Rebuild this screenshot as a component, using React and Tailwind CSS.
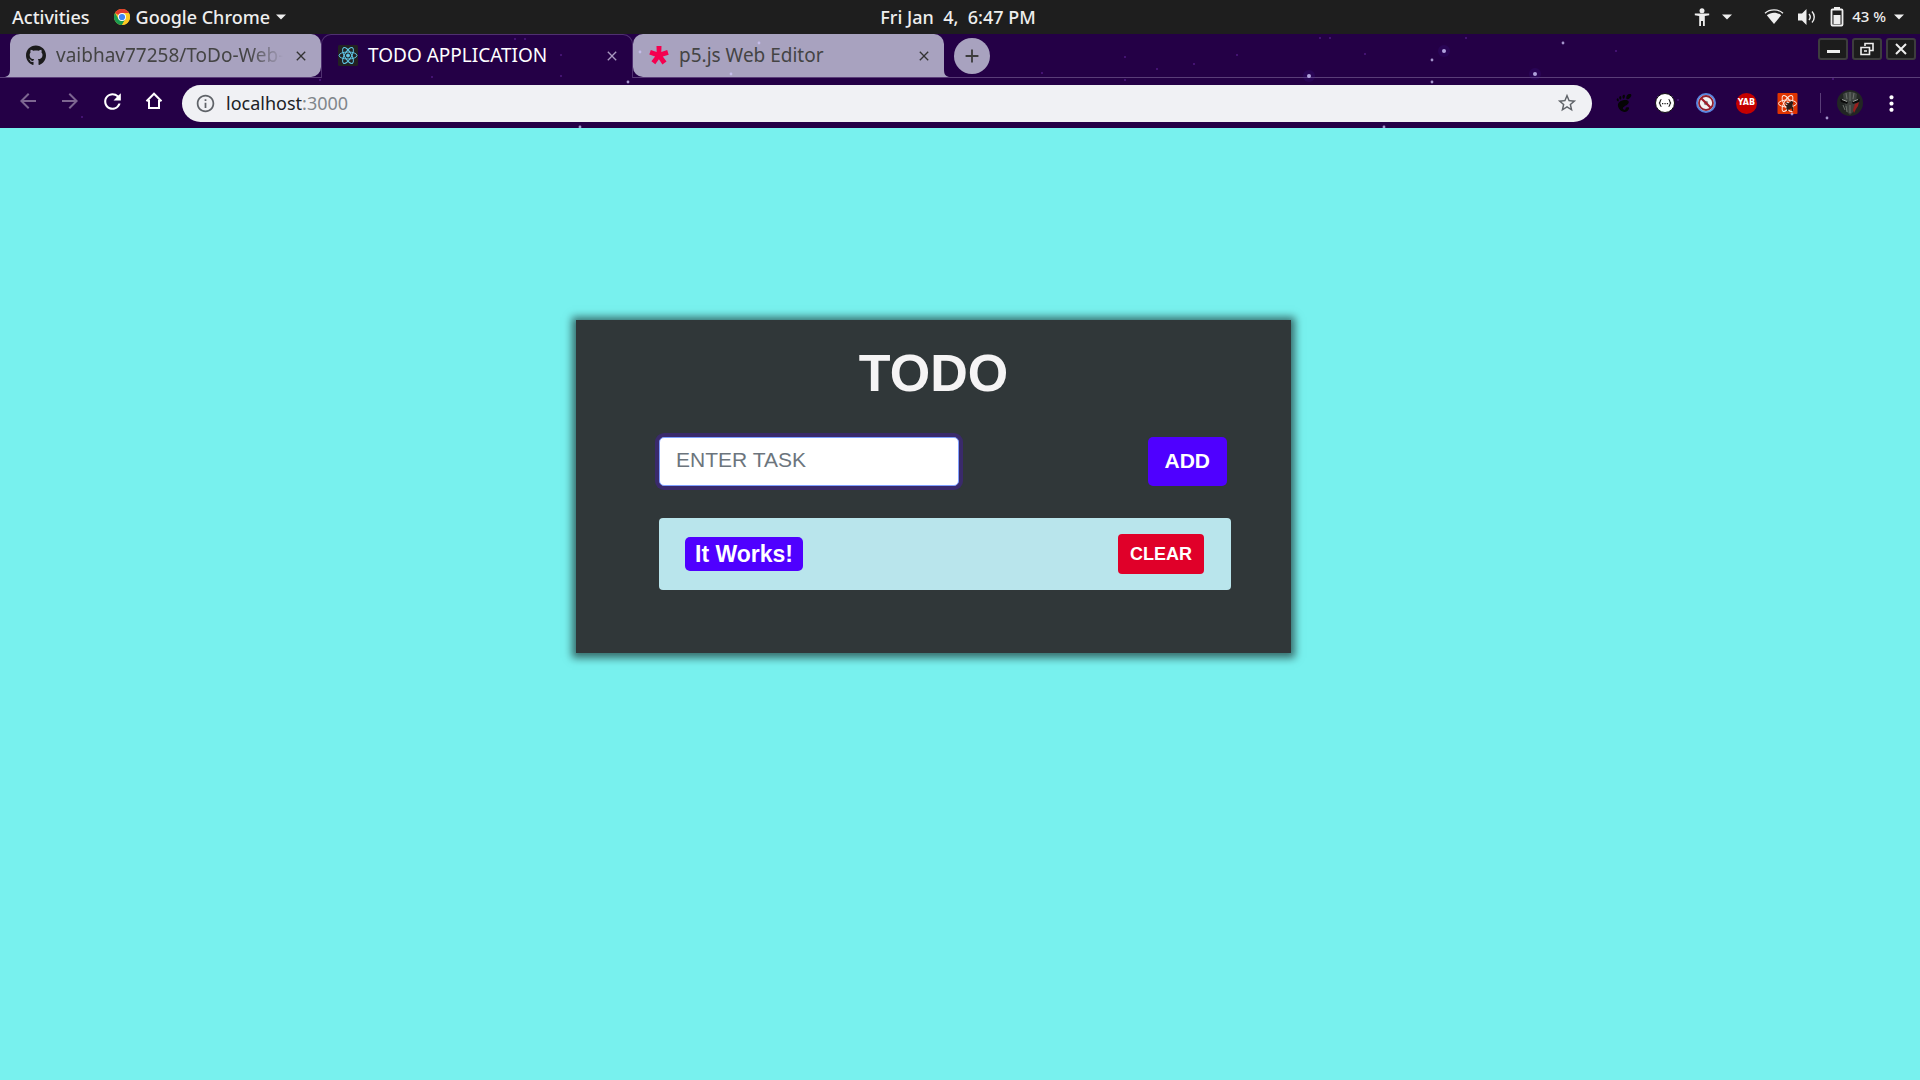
import { useState } from "react";
import { FaGithub } from "react-icons/fa";
import { SiGnome } from "react-icons/si";
import {
  MdAdd,
  MdArrowBack,
  MdArrowForward,
  MdClose,
  MdInfoOutline,
  MdMoreVert,
  MdRefresh,
  MdStarBorder,
} from "react-icons/md";

const faintStars = [
  [515, 5], [525, 5], [561, 21], [561, 42], [1125, 23], [1125, 46], [1042, 39],
  [1157, 35], [1194, 30], [1237, 21], [1320, 4], [1330, 4], [1365, 20], [1466, 4], [1616, 17],
  [320, 46], [432, 43], [82, 83], [1678, 66], [1833, 45],
];
const smallStars = [
  [640, 18], [759, 9], [731, 40], [628, 48], [1432, 26], [1432, 48], [1563, 9], [1792, 80],
  [1827, 84], [580, 93], [1384, 93],
];
const glowingStars = [[1309, 42], [1444, 17], [1535, 40]];

function Stars() {
  return (
    <svg className="pointer-events-none absolute inset-0 h-full w-full" aria-hidden="true">
      {faintStars.map(([x, y]) => (
        <circle key={`${x}-${y}`} cx={x} cy={y} r="1" fill="#6a2aa8" opacity="0.6" />
      ))}
      {smallStars.map(([x, y]) => (
        <circle key={`${x}-${y}`} cx={x} cy={y} r="1.4" fill="#cfc6f8" opacity="0.75" />
      ))}
      {glowingStars.map(([x, y]) => (
        <g key={`${x}-${y}`}>
          <circle cx={x} cy={y} r="6" fill="#4a20b0" opacity="0.15" />
          <circle cx={x} cy={y} r="2" fill="#c9c0f5" opacity="0.85" />
        </g>
      ))}
    </svg>
  );
}

function Caret() {
  return (
    <svg width="10" height="6" viewBox="0 0 10 6" aria-hidden="true">
      <path d="M0 .5h10L5 5.5z" fill="#eee" />
    </svg>
  );
}

function ChromeLogo() {
  return (
    <svg width="16" height="16" viewBox="0 0 16 16" aria-hidden="true">
      <circle cx="8" cy="8" r="8" fill="#fbc02d" />
      <path d="M8 8 1.07 4A8 8 0 0 1 14.93 4H8z" fill="#e23b2e" />
      <path d="M8 8 4.5 10 1.07 4A8 8 0 0 0 8 16l3.5-6z" fill="#1a9c50" />
      <path d="M8 4h6.93A8 8 0 0 1 8 16l3.5-6z" fill="#fdc922" />
      <circle cx="8" cy="8" r="4" fill="#fff" />
      <circle cx="8" cy="8" r="3.1" fill="#4285f4" />
    </svg>
  );
}

function Atom({ color }) {
  return (
    <g fill="none" stroke={color} strokeWidth="1">
      <ellipse cx="10" cy="10.500" rx="9" ry="3.500" />
      <ellipse cx="10" cy="10.500" rx="9" ry="3.500" transform="rotate(60 10 10.500)" />
      <ellipse cx="10" cy="10.500" rx="9" ry="3.500" transform="rotate(120 10 10.500)" />
      <circle cx="10" cy="10.500" r="1.500" fill={color} />
    </g>
  );
}

function ReactIcon() {
  return (
    <svg width="20" height="21" viewBox="0 0 20 21" aria-hidden="true">
      <rect width="20" height="21" rx="1.500" fill="#222" />
      <Atom color="#61c8e8" />
    </svg>
  );
}

function P5Icon() {
  return (
    <svg width="20" height="20" viewBox="0 0 20 20" aria-hidden="true">
      <path
        d="M7.500 0h5l-.2 6 5.900-1.900L19.700 8.700l-5.900 1.800 3.700 4.900-4.100 3-3.500-5.200-3.600 5-3.900-3 3.700-4.800L.3 8.500 1.800 4l5.900 2z"
        fill="#f5004f"
      />
    </svg>
  );
}

function HomeIcon() {
  return (
    <svg width="18" height="18" viewBox="0 0 18 18" aria-hidden="true">
      <path d="M1.500 9.200 9 1.700l7.500 7.500M4 8v8h10V8" fill="none" stroke="#fff" strokeWidth="2" />
    </svg>
  );
}

function PersonIcon() {
  return (
    <svg width="16" height="18" viewBox="0 0 16 18" aria-hidden="true">
      <circle cx="8" cy="2.700" r="2.500" fill="#eee" />
      <path d="M.8 5.500h14.400v1.800L10.800 8v10H9v-5H7v5H5.200V8L.8 7.300z" fill="#eee" />
    </svg>
  );
}

function WifiIcon() {
  return (
    <svg width="20" height="17" viewBox="0 0 20 17" aria-hidden="true">
      <path d="M1 5.200C6 .8 14 .8 19 5.200" fill="none" stroke="#eee" strokeWidth="1.300" />
      <path d="M2.800 7.200C7 3.800 13 3.800 17.200 7.200L10 16z" fill="#eee" />
    </svg>
  );
}

function VolumeIcon() {
  return (
    <svg width="20" height="18" viewBox="0 0 20 18" aria-hidden="true">
      <path d="M1 5.500h4L9.500 1v16L5 12.500H1z" fill="#eee" />
      <path d="M12 6c1.500 1.800 1.500 4.200 0 6M15 3.500c3 3.200 3 7.800 0 11" fill="none" stroke="#eee" strokeWidth="1.400" />
    </svg>
  );
}

function BatteryIcon() {
  return (
    <svg width="14" height="20" viewBox="0 0 14 20" aria-hidden="true">
      <path d="M4 0h6v2H4z" fill="#eee" />
      <rect x="1.500" y="2.500" width="11" height="16" rx="1" fill="none" stroke="#eee" strokeWidth="1.800" />
      <path d="M3.500 8h7v9h-7z" fill="#eee" />
    </svg>
  );
}

function TopBar() {
  return (
    <header className="grid h-[34px] grid-cols-[1fr_auto_1fr] items-center bg-[#1e1e1e] pl-3 pr-4 text-lg font-medium text-[#eee]">
      <div className="flex items-center gap-6">
        <button type="button">Activities</button>
        <button type="button" className="flex items-center gap-1.5">
          <ChromeLogo />
          <span>Google Chrome</span>
          <Caret />
        </button>
      </div>
      <button type="button">Fri Jan&nbsp; 4,&nbsp; 6:47 PM</button>
      <div className="flex items-center justify-end">
        <button type="button" aria-label="Accessibility" className="mr-8 flex items-center gap-3">
          <PersonIcon />
          <Caret />
        </button>
        <button type="button" aria-label="System menu" className="flex items-center text-[15px]">
          <span className="flex items-center gap-[13px]">
            <WifiIcon />
            <VolumeIcon />
            <BatteryIcon />
          </span>
          <span className="mx-2">43 %</span>
          <Caret />
        </button>
      </div>
    </header>
  );
}

function Tab({ icon, title, active, fade, round }) {
  const look = active
    ? "h-full border-x border-t border-[#4f3070] rounded-t-[10px] text-white pb-[2px]"
    : `h-[43px] bg-[#a8a2bf] text-[#444] rounded-t-[10px] ${round}`;
  return (
    <div className={active ? "w-[312px]" : "h-full w-[311px] border-b border-[#5a3d78]"}>
      <div className={`flex items-center gap-2.5 pl-4 pr-3 ${look}`}>
        <span className="flex w-5 shrink-0 justify-center">{icon}</span>
        <button
          type="button"
          role="tab"
          aria-selected={!!active}
          className={`min-w-0 flex-1 whitespace-nowrap text-left ${
            fade ? "[mask-image:linear-gradient(90deg,#000_85%,transparent)]" : ""
          }`}
        >
          {title}
        </button>
        <button type="button" aria-label={`Close ${title}`} className={active ? "text-[#a898bf]" : "text-[#333]"}>
          <MdClose size={16} />
        </button>
      </div>
    </div>
  );
}

function WindowButton({ label, children }) {
  return (
    <button
      type="button"
      aria-label={label}
      className="flex h-[22px] w-[30px] items-center justify-center rounded-[3px] border-2 border-[#3d3d3d] bg-[#1c1c1c]"
    >
      <svg width="16" height="16" viewBox="0 0 16 16" fill="none" stroke="#eee" aria-hidden="true">
        {children}
      </svg>
    </button>
  );
}

function TabStrip() {
  return (
    <div className="flex h-11 text-[19px]">
      <div className="flex h-full w-[10px] items-end border-b border-[#5a3d78]">
        <svg width="10" height="8" viewBox="0 0 10 8" aria-hidden="true">
          <path d="M10 0v8H5C9 7 10 5 10 0z" fill="#a8a2bf" />
        </svg>
      </div>
      <div role="tablist" className="flex">
        <Tab icon={<FaGithub size={21} color="#1b1b1b" />} title="vaibhav77258/ToDo-Web-" fade round="rounded-br-[10px]" />
        <Tab icon={<ReactIcon />} title="TODO APPLICATION" active />
        <Tab icon={<P5Icon />} title="p5.js Web Editor" round="rounded-bl-[10px]" />
      </div>
      <div className="flex h-full flex-1 justify-between border-b border-[#5a3d78]">
        <div className="flex items-end">
          <svg width="6" height="8" viewBox="0 0 6 8" aria-hidden="true">
            <path d="M0 0v8h5C1 7 0 5 0 0z" fill="#a8a2bf" />
          </svg>
          <button
            type="button"
            aria-label="New tab"
            className="mb-[3px] ml-1 flex size-9 items-center justify-center rounded-full bg-[#a8a2bf] text-[#3c3c3c]"
          >
            <MdAdd size={22} />
          </button>
        </div>
        <div className="mr-1 mt-1 flex gap-1">
          <WindowButton label="Minimize">
            <path d="M2 10.500h13" strokeWidth="3" />
          </WindowButton>
          <WindowButton label="Restore">
            <path d="M6 5V2.500h8v7h-3M2 6.500h8.500v7H2zM5 10h3" strokeWidth="1.600" />
          </WindowButton>
          <WindowButton label="Close window">
            <path d="m3 3 10 10M13 3 3 13" strokeWidth="2" />
          </WindowButton>
        </div>
      </div>
    </div>
  );
}

function ToolButton({ label, children, narrow }) {
  return (
    <button
      type="button"
      aria-label={label}
      className={`flex h-9 items-center justify-center text-white ${narrow ? "w-[41px]" : "w-[42px]"}`}
    >
      {children}
    </button>
  );
}

function Extensions() {
  return (
    <div className="ml-[11px] flex">
      <ToolButton label="GNOME Shell integration" narrow>
        <SiGnome size={18} color="#050505" />
      </ToolButton>
      <ToolButton label="JSON viewer" narrow>
        <svg width="20" height="20" viewBox="0 0 20 20" aria-hidden="true">
          <circle cx="10" cy="10" r="9.500" fill="#fff" stroke="#111" />
          <path
            d="M6.500 6.500C4.500 6.500 6 9.500 4 10c2 .5.5 3.500 2.500 3.500M13.500 6.500c2 0 .5 3 2.500 3.500-2 .5-.5 3.500-2.500 3.500"
            fill="none"
            stroke="#222"
            strokeWidth="1.200"
          />
          <path d="M7 10h1.300v1.300H7zM9.400 10h1.300v1.300H9.400zM11.800 10h1.300v1.300h-1.300z" fill="#222" />
        </svg>
      </ToolButton>
      <ToolButton label="Popup blocker" narrow>
        <svg width="20" height="20" viewBox="0 0 20 20" fill="none" aria-hidden="true">
          <circle cx="10" cy="10" r="9" fill="#f3f3f3" stroke="#5b86e0" strokeWidth="2" />
          <circle cx="10" cy="10" r="2.200" fill="#888" />
          <circle cx="10" cy="10" r="7" stroke="#8f2030" strokeWidth="1.800" />
          <path d="m5 5 10 10" stroke="#a01c28" strokeWidth="2.200" />
        </svg>
      </ToolButton>
      <ToolButton label="YAB" narrow>
        <span className="flex size-[21px] items-center justify-center rounded-full bg-[#c40000] font-['DejaVu_Sans'] text-[8px] font-bold leading-none">
          YAB
        </span>
      </ToolButton>
      <ToolButton label="React developer tools" narrow>
        <svg width="21" height="21" viewBox="0 0 20 21" aria-hidden="true">
          <rect width="20" height="21" rx="1" fill="#e03400" />
          <Atom color="#ffe9e0" />
          <ellipse cx="12" cy="13" rx="2.600" ry="3.500" transform="rotate(35 12 13)" fill="#2a1c18" />
          <circle cx="14" cy="9.800" r="1.700" fill="#2a1c18" />
          <path d="m8 12 8 4M9 16l5-5M8 9.500l7 4M10 18l1-4M15 18v-4" stroke="#2a1c18" strokeWidth="1.200" />
        </svg>
      </ToolButton>
    </div>
  );
}

function Avatar() {
  return (
    <svg width="26" height="26" viewBox="0 0 26 26" aria-hidden="true">
      <circle cx="13" cy="13" r="13" fill="#222624" />
      <path d="M6 4c4-3 10-3 14 0l-1 8-3 10-3 3-3-3-3-10z" fill="#3d423f" />
      <path d="m3 9 8 3-1 2-6-2zM23 9l-8 3 1 2 6-2z" fill="#0a0a0a" />
      <path d="m5 9.500 5 2M21 9.500l-5 2" stroke="#b8bcb8" strokeWidth=".8" />
      <path d="M13 2v9M9 3l1 6M17 3l-1 6M9 16l1 6M13 15v8M6 15l2 5" stroke="#737873" strokeWidth=".9" />
      <path d="m18 14 4-2-1 4-2 3-2 4-1-3z" fill="#97201e" />
    </svg>
  );
}

function Toolbar() {
  return (
    <div className="flex h-[50px] items-center pb-px pl-[7px] pt-px text-lg">
      <div className="mb-1 flex">
        <ToolButton label="Back">
          <MdArrowBack size={24} color="#7d6691" />
        </ToolButton>
        <ToolButton label="Forward">
          <MdArrowForward size={24} color="#7d6691" />
        </ToolButton>
        <ToolButton label="Reload">
          <MdRefresh size={25} />
        </ToolButton>
        <ToolButton label="Home">
          <HomeIcon />
        </ToolButton>
      </div>
      <div className="ml-[7px] flex h-[37px] flex-1 items-center rounded-full bg-[#f0f1f4] pl-[13px] pr-3.5 text-[#5f6368]">
        <button type="button" aria-label="Site information">
          <MdInfoOutline size={21} />
        </button>
        <div
          role="textbox"
          aria-label="Address"
          contentEditable
          suppressContentEditableWarning
          className="ml-2.5 flex-1 text-[#202124] outline-none"
        >
          localhost<span className="text-[#80868b]">:3000</span>
        </div>
        <button type="button" aria-label="Bookmark this page">
          <MdStarBorder size={22} />
        </button>
      </div>
      <Extensions />
      <div className="ml-3 mr-4 h-5 w-px bg-[#5a3d78]" />
      <button type="button" aria-label="Profile">
        <Avatar />
      </button>
      <button type="button" aria-label="Menu" className="ml-4 mr-4 text-white">
        <MdMoreVert size={25} />
      </button>
    </div>
  );
}

function TodoCard() {
  const [task, setTask] = useState("");
  return (
    <section className="ml-[30%] mt-[10%] w-[715px] max-w-full bg-[#303739] pb-[63px] pl-[83px] pr-[60px] pt-[22px] font-['Liberation_Sans',sans-serif] shadow-[0_1px_8px_4px_rgba(0,0,0,0.55)]">
      <h1 className="mb-[33px] mr-[23px] text-center text-[52px] font-bold leading-[62px] text-[#f5f4f5]">TODO</h1>
      <form className="mr-1 flex items-center justify-between" onSubmit={(e) => e.preventDefault()}>
        <input
          type="text"
          aria-label="Task"
          placeholder="ENTER TASK"
          value={task}
          onChange={(e) => setTask(e.target.value)}
          className="h-[49px] w-[300px] rounded-[5px] border border-[#80a0ff] bg-white px-4 pb-[3px] text-[21px] text-[#495057] shadow-[0_0_0_4px_#3a2a6b] outline-none placeholder:text-[#6c757d]"
        />
        <button type="submit" className="h-[49px] rounded-[5px] bg-[#4f00ff] px-[17px] pb-px text-[21px] font-bold text-white">
          ADD
        </button>
      </form>
      <ul className="mt-8">
        <li className="flex h-[72px] items-center justify-between rounded-[4px] bg-[#b9e5ec] pl-[26px] pr-[27px]">
          <span className="flex h-[34px] items-center rounded-[5px] bg-[#4f00ff] px-2.5 text-[23px] font-bold text-white">
            It Works!
          </span>
          <button type="button" className="h-10 rounded-[4px] bg-[#e00029] px-3 text-lg font-bold text-white">
            CLEAR
          </button>
        </li>
      </ul>
    </section>
  );
}

export default function App() {
  return (
    <div className="flex min-h-screen flex-col bg-[#78f1ee] font-['Noto_Sans','Open_Sans',sans-serif]">
      <TopBar />
      <div className="relative bg-[#240046]">
        <TabStrip />
        <Toolbar />
        <Stars />
      </div>
      <main className="flow-root flex-1">
        <TodoCard />
      </main>
    </div>
  );
}
